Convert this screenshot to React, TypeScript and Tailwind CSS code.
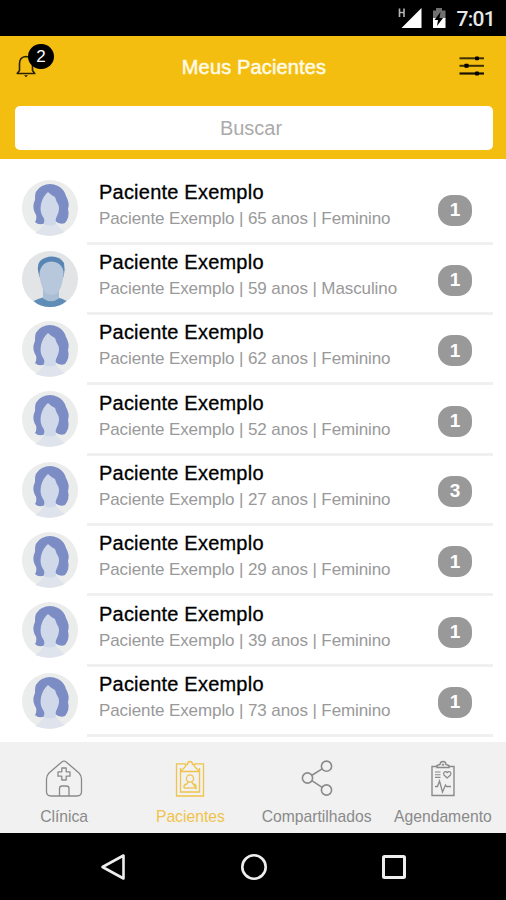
import { useState } from "react"
import type { ReactNode } from "react"
import clsx from "clsx"

type Paciente = {
  id: number
  nome: string
  idade: number
  sexo: "Feminino" | "Masculino"
  total: number
}

const pacientes: Paciente[] = [
  { id: 1, nome: "Paciente Exemplo", idade: 65, sexo: "Feminino", total: 1 },
  { id: 2, nome: "Paciente Exemplo", idade: 59, sexo: "Masculino", total: 1 },
  { id: 3, nome: "Paciente Exemplo", idade: 62, sexo: "Feminino", total: 1 },
  { id: 4, nome: "Paciente Exemplo", idade: 52, sexo: "Feminino", total: 1 },
  { id: 5, nome: "Paciente Exemplo", idade: 27, sexo: "Feminino", total: 3 },
  { id: 6, nome: "Paciente Exemplo", idade: 29, sexo: "Feminino", total: 1 },
  { id: 7, nome: "Paciente Exemplo", idade: 39, sexo: "Feminino", total: 1 },
  { id: 8, nome: "Paciente Exemplo", idade: 73, sexo: "Feminino", total: 1 },
]

const tabs: { id: string; label: string; icon: ReactNode }[] = [
  { id: "clinica", label: "Clínica", icon: <ClinicaIcon /> },
  { id: "pacientes", label: "Pacientes", icon: <PacientesIcon /> },
  { id: "compartilhados", label: "Compartilhados", icon: <CompartilhadosIcon /> },
  { id: "agendamento", label: "Agendamento", icon: <AgendamentoIcon /> },
]

function ClinicaIcon() {
  return (
    <svg width="40" height="40" viewBox="0 0 40 40" fill="none" stroke="currentColor" strokeWidth="1.3">
      <path d="M17.5 3.2Q20 1.2 22.5 3.2L35 14Q37.5 16.5 37.5 20V32.5Q37.5 37 33 37H7Q2.500 37 2.500 32.500V20Q2.500 16.500 5 14Z" />
      <path d="M17.800 9H22.200V12.800H26V17.200H22.200V21H17.800V17.200H14V12.800H17.800Z" strokeLinejoin="round" />
      <path d="M15.500 37V29.500Q15.500 27 18 27H22.500Q25 27 25 29.500V37" />
    </svg>
  )
}

function PacientesIcon() {
  return (
    <svg width="40" height="40" viewBox="0 0 40 40" fill="none" stroke="currentColor" strokeWidth="1.3">
      <path d="M15.500 4.800H6.500V37H33.500V4.800H24.500" />
      <path d="M10.500 12.500L15.500 7.500V5.500H17.500Q17.700 2.500 20 2.500Q22.300 2.500 22.500 5.500H24.500V7.500L29.500 12.500" />
      <path d="M10.500 9V33H29.500V9M10.500 12.500H29.500" />
      <circle cx="20" cy="19.500" r="3.600" />
      <path d="M14 29V27.500Q14 25.300 17 25L18.300 22.800M21.700 22.800L23 25Q26 25.300 26 27.500V29Z" />
      <path d="M14 29H26" />
    </svg>
  )
}

function CompartilhadosIcon() {
  return (
    <svg width="40" height="40" viewBox="0 0 40 40" fill="none" stroke="currentColor" strokeWidth="1.6">
      <circle cx="29.500" cy="7.200" r="5.100" />
      <circle cx="10.500" cy="19" r="5.100" />
      <circle cx="29.500" cy="31" r="5.100" />
      <path d="M14.900 16.300L25.100 9.900M14.900 21.700L25.100 28.300" />
    </svg>
  )
}

function AgendamentoIcon() {
  return (
    <svg width="40" height="40" viewBox="0 0 40 40" fill="none" stroke="currentColor" strokeWidth="1.4">
      <path d="M14.500 7.500H9V36.500H31V7.500H25.500" />
      <path d="M14 8.500V6.500L17 5.500Q17.300 2.500 20 2.500Q22.700 2.500 23 5.500L26 6.500V8.500Z" />
      <path d="M18.700 5.800H21.300M20 4.500V7.100" strokeWidth="1" />
      <path d="M12 13H17.500M12 15.700H17.500M12 18.400H17.500" strokeWidth="1.100" />
      <path d="M24.200 19L21 16Q20 14.300 21.300 13Q23 12 24.200 13.600Q25.500 12 27.200 13Q28.500 14.300 27.500 16Z" strokeWidth="1.200" />
      <path d="M12 27.500H14.500L16.500 22L19.500 33L22.500 26L23.500 27.500H28" strokeWidth="1.300" />
    </svg>
  )
}

function BellIcon() {
  return (
    <svg width="20" height="24" viewBox="0 0 20 24" fill="none" stroke="#2a2105" strokeWidth="1.600" strokeLinejoin="round">
      <path d="M1.200 19.500L3.500 16.500V9.500Q3.500 3 10 2.500Q16.500 3 16.500 9.500V16.500L18.800 19.500Z" />
      <path d="M8 21.200H12L10 23.200Z" fill="#2a2105" stroke="none" />
    </svg>
  )
}

function FilterIcon() {
  return (
    <svg width="26" height="20" viewBox="0 0 26 20">
      <path d="M.5 2.300H25" stroke="#3d3005" strokeWidth="2" />
      <path d="M.5 9.800H25" stroke="#3d3005" strokeWidth="2" />
      <path d="M.5 17.500H25" stroke="#171202" strokeWidth="2.200" />
      <rect x="16" y=".5" width="4" height="3.800" rx="1" />
      <rect x="5.500" y="7.800" width="4" height="4" rx=".5" />
      <rect x="16" y="15.400" width="4" height="4" rx="1" />
    </svg>
  )
}

function FemaleAvatar() {
  return (
    <svg width="56" height="56" viewBox="0 0 56 56">
      <circle cx="28" cy="28" r="28" fill="#ebecec" />
      <path
        d="M23 43Q17 46 13 42Q16 37 12.500 32Q10 26 13 20Q12 10 20 6Q28 2 36 6Q42 9 44 16Q48 23 46 29Q48 37 43 43Q38 45 33 41Z"
        fill="#7c8cc4"
      />
      <path d="M13 53Q20 49 23 41H33Q36 48 43 52Q28 59 13 53Z" fill="#dfe4ec" />
      <path d="M26 12Q21 16 19 24Q17.500 32 21 37Q23 39 22 44Q28 47 34 44Q33 39 35 36Q38 30 36.500 25Q34 21 33 17Q29 15 26 12Z" fill="#cfd9e9" />
    </svg>
  )
}

function MaleAvatar() {
  return (
    <svg width="56" height="56" viewBox="0 0 56 56">
      <circle cx="28" cy="28" r="28" fill="#e2e4e5" />
      <path d="M11.500 50Q16 47.500 21 46.500H36Q41 47.500 44.500 50Q38 56 28 56Q18 56 11.500 50Z" fill="#5f8db8" />
      <path d="M21 37H37V47.500Q29 53 21 47.500Z" fill="#a9bfd6" />
      <path d="M17.500 26Q14 15 18 10Q23 5.500 30 5.500Q38 5.500 42 12Q43.500 19 41.500 26Z" fill="#5885b3" />
      <path d="M19 17Q22 10.500 29.500 10.500Q37 10.500 40.500 17Q42.500 22 41 28Q39 39 35 42Q29.500 46 24 42Q20 39 18 28Q16.500 22 19 17Z" fill="#b7c8dc" />
    </svg>
  )
}

function StatusBar() {
  return (
    <div className="flex h-9 items-center justify-end bg-black pr-[11px] text-white">
      <svg width="49" height="22" viewBox="0 0 49 22" className="mr-2.5 mb-px">
        <path d="M2.500 1.500V10M7 1.500V10M2.500 5.500H7" stroke="#b5b5b5" strokeWidth="1.600" fill="none" />
        <path d="M24.500 1V21H4.500Z" fill="#fff" />
        <path d="M36 3.500H39V1H45V3.500H48.500V12H36Z" fill="#707070" />
        <path d="M36 11H48.500V21H36Z" fill="#fff" />
        <path d="M43.500 5L37.500 13H41L40 19L46 11H42.500Z" fill="#000" />
      </svg>
      <span className="mt-0.5 font-[Roboto] text-[21px] leading-none font-medium tracking-[-0.7px] text-[#e8e8e8]">7:01</span>
    </div>
  )
}

function PacienteRow({ paciente }: { paciente: Paciente }) {
  return (
    <li className="flex h-[70.35px] pr-[13px] pl-[22px]">
      <div className="mt-[6px] h-14 w-14 shrink-0">
        {paciente.sexo === "Feminino" ? <FemaleAvatar /> : <MaleAvatar />}
      </div>
      <div className="ml-[9px] flex flex-1 items-start justify-between border-b-[3px] border-[#f0f0f0] pr-[21px] pl-3">
        <div className="pt-[5.5px] whitespace-nowrap">
          <p className="text-[20px] leading-6 tracking-[0.22px] text-black [-webkit-text-stroke:0.3px_black]">{paciente.nome}</p>
          <p className="mt-[5px] text-[17px] leading-5 tracking-[-0.1px] text-[#999]">
            {paciente.nome} | {paciente.idade} anos | {paciente.sexo}
          </p>
        </div>
        <span className="mt-[20.5px] flex h-[31px] w-[34px] items-center justify-center rounded-[14px] bg-[#999] text-[19px] font-bold text-white">
          {paciente.total}
        </span>
      </div>
    </li>
  )
}

export default function App() {
  const [activeTab, setActiveTab] = useState("pacientes")

  return (
    <div className="flex h-[900px] w-[506px] flex-col overflow-hidden bg-white font-['Liberation_Sans',Arial,sans-serif]">
      <StatusBar />

      <header className="h-[123px] shrink-0 bg-[#f4be10] px-[15px]">
        <div className="flex h-[70px] items-start justify-between">
          <button className="relative mt-[18px] ml-px h-6 w-10">
            <BellIcon />
            <span className="absolute -top-[10px] left-3 flex h-[25px] w-[26px] items-center justify-center rounded-full bg-black text-[17px] text-white">
              2
            </span>
          </button>
          <h1 className="mt-[19px] ml-[-7px] text-[20px] leading-6 tracking-[0.15px] text-[#fffbe8] [-webkit-text-stroke:0.5px_#fffbe8]">
            Meus Pacientes
          </h1>
          <button className="mt-5 mr-1.5">
            <FilterIcon />
          </button>
        </div>
        <input
          type="text"
          placeholder="Buscar"
          className="block h-11 w-[478px] rounded-[5px] bg-white pr-1.5 text-center text-[20px] outline-none placeholder:text-[#aaa]"
        />
      </header>

      <main className="h-[583px] shrink-0 overflow-hidden pt-[15.200px]">
        <ul>
          {pacientes.map((paciente) => (
            <PacienteRow key={paciente.id} paciente={paciente} />
          ))}
        </ul>
      </main>

      <nav className="grid h-[91px] shrink-0 grid-cols-4 bg-[#f1f1f1] pl-px">
        {tabs.map((tab) => (
          <button
            key={tab.id}
            onClick={() => setActiveTab(tab.id)}
            className={clsx(
              "flex flex-col items-center pt-[17px] text-[15.7px] leading-5",
              activeTab === tab.id ? "text-[#f0c34a]" : "text-[#8a8a8a]"
            )}
          >
            {tab.icon}
            <span className="mt-2">{tab.label}</span>
          </button>
        ))}
      </nav>

      <footer className="flex h-[67px] items-center bg-black pl-[100px]">
        <svg width="26" height="28" viewBox="0 0 26 28" fill="none" stroke="#eee" strokeWidth="2.600" strokeLinejoin="round">
          <path d="M23.500 2.500V25.500L2.500 14Z" />
        </svg>
        <svg width="28" height="28" viewBox="0 0 28 28" fill="none" stroke="#eee" strokeWidth="2.600" className="ml-[114px]">
          <circle cx="14" cy="14" r="11.700" />
        </svg>
        <svg width="26" height="26" viewBox="0 0 26 26" fill="none" stroke="#eee" strokeWidth="3" className="ml-[113px]">
          <rect x="2.500" y="2.500" width="21" height="21" rx="1" />
        </svg>
      </footer>
    </div>
  )
}
